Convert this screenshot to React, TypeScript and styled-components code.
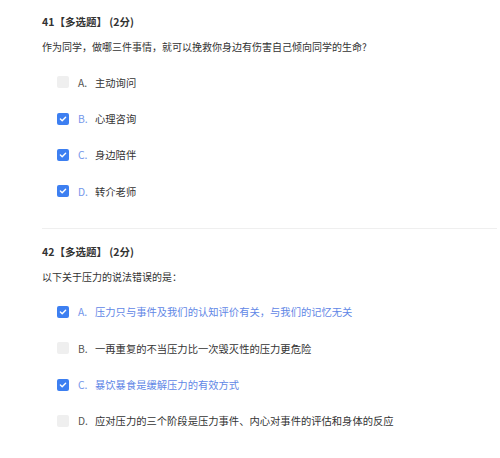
import React from 'react';
import styled, { createGlobalStyle } from 'styled-components';

const GlobalStyle = createGlobalStyle`
  body {
    margin: 0;
    background: #ffffff;
    font-family: "Noto Sans CJK SC", "Noto Sans", sans-serif;
  }
`;

const Page = styled.div`
  width: 500px;
  padding: 12px 0 0 42px;
  box-sizing: border-box;
`;

const Question = styled.section`
  display: flex;
  flex-direction: column;
`;

const Title = styled.div`
  font-size: 10.5px;
  line-height: 20px;
  font-weight: 700;
  color: #333333;
`;

const Stem = styled.div`
  font-size: 10px;
  line-height: 20px;
  margin-top: 5px;
  color: #333333;
`;

const Options = styled.div`
  display: flex;
  flex-direction: column;
  margin-top: 7px;
  padding-left: 15px;
`;

const Option = styled.div<{ $blue: boolean }>`
  display: flex;
  align-items: center;
  height: 36.4px;
  font-size: 10.3px;
  color: ${(p) => (p.$blue ? '#5f87e6' : '#333333')};
`;

const Box = styled.span<{ $checked: boolean }>`
  width: 12px;
  height: 12px;
  border-radius: 2px;
  background: ${(p) => (p.$checked ? '#3d7ff1' : '#efefef')};
  display: flex;
  align-items: center;
  justify-content: center;
  flex-shrink: 0;
`;

const Letter = styled.span<{ $checked: boolean }>`
  margin-left: 9px;
  width: 17px;
  color: ${(p) => (p.$checked ? '#7396ea' : '#555555')};
`;

const Divider = styled.div`
  height: 1px;
  background: #efefef;
  margin: 18px 3px 13px 0;
`;

type Opt = { letter: string; text: string; checked: boolean; blue: boolean };

const Check = () => (
  <svg width="8" height="8" viewBox="0 0 8 8">
    <path d="M1.4 4.1 L3.2 5.8 L6.6 2.2" fill="none" stroke="#fff" strokeWidth="1.4" strokeLinecap="round" strokeLinejoin="round" />
  </svg>
);

const QuestionBlock = ({ title, stem, options }: { title: string; stem: string; options: Opt[] }) => (
  <Question>
    <Title>{title}</Title>
    <Stem>{stem}</Stem>
    <Options>
      {options.map((o) => (
        <Option key={o.letter} $blue={o.blue}>
          <Box $checked={o.checked}>{o.checked && <Check />}</Box>
          <Letter $checked={o.checked}>{o.letter}.</Letter>
          <span>{o.text}</span>
        </Option>
      ))}
    </Options>
  </Question>
);

const q1: Opt[] = [
  { letter: 'A', text: '主动询问', checked: false, blue: false },
  { letter: 'B', text: '心理咨询', checked: true, blue: false },
  { letter: 'C', text: '身边陪伴', checked: true, blue: false },
  { letter: 'D', text: '转介老师', checked: true, blue: false },
];

const q2: Opt[] = [
  { letter: 'A', text: '压力只与事件及我们的认知评价有关，与我们的记忆无关', checked: true, blue: true },
  { letter: 'B', text: '一再重复的不当压力比一次毁灭性的压力更危险', checked: false, blue: false },
  { letter: 'C', text: '暴饮暴食是缓解压力的有效方式', checked: true, blue: true },
  { letter: 'D', text: '应对压力的三个阶段是压力事件、内心对事件的评估和身体的反应', checked: false, blue: false },
];

export default function App() {
  return (
    <>
      <GlobalStyle />
      <Page>
        <QuestionBlock
          title="41【多选题】 (2分)"
          stem="作为同学，做哪三件事情，就可以挽救你身边有伤害自己倾向同学的生命?"
          options={q1}
        />
        <Divider />
        <QuestionBlock title="42【多选题】 (2分)" stem="以下关于压力的说法错误的是：" options={q2} />
      </Page>
    </>
  );
}
